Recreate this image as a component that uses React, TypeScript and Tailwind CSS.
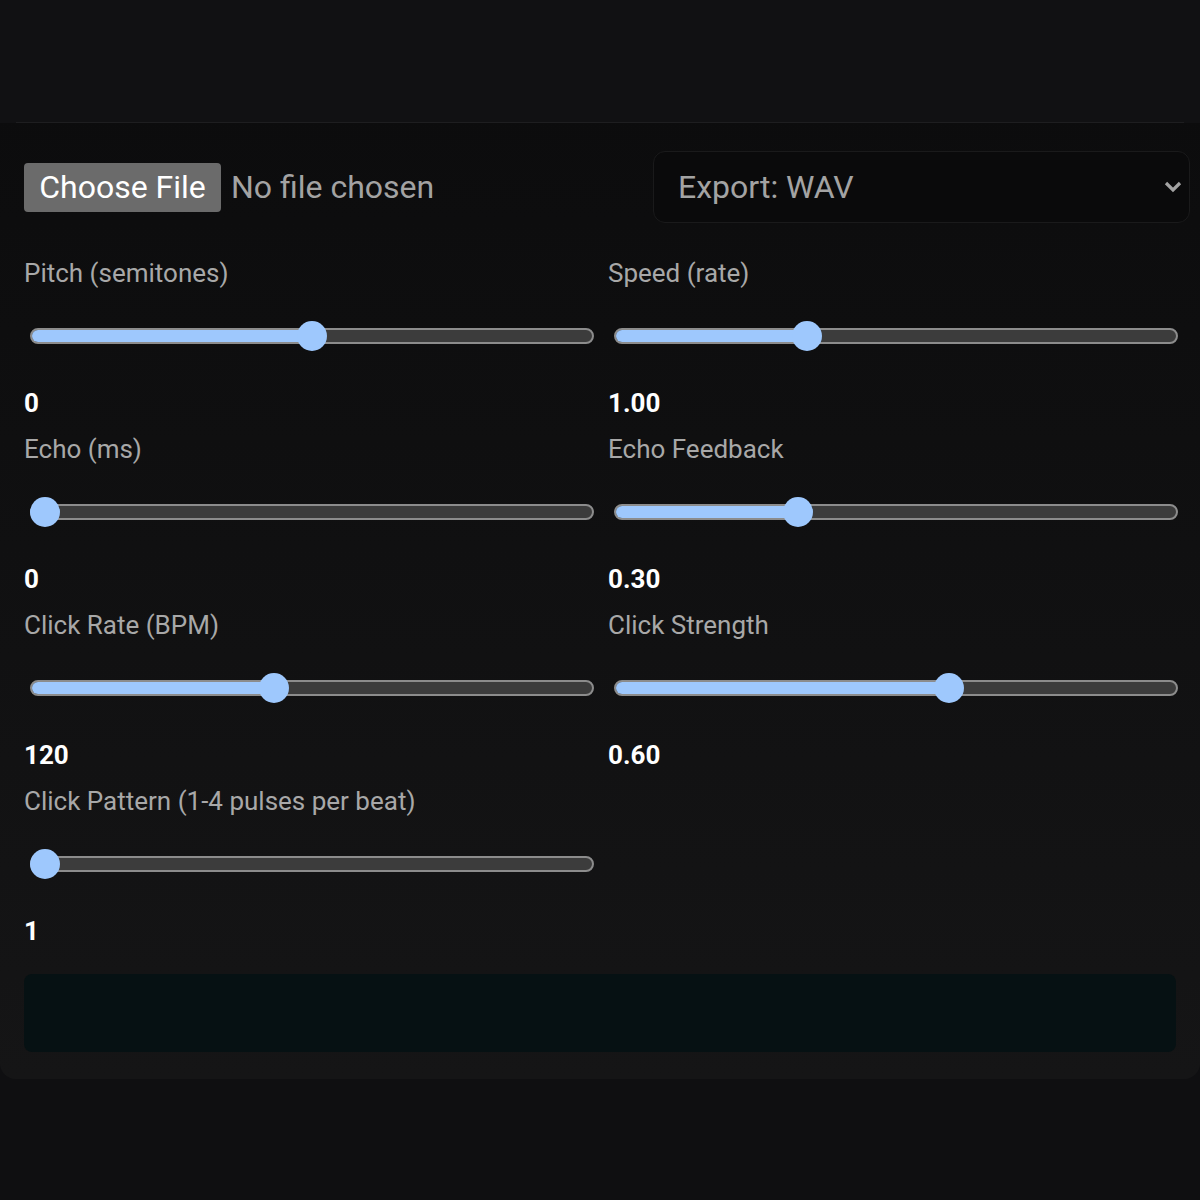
import React from "react";

type Control = {
  label: string;
  value: string;
  frac: number;
};

const controls: Control[] = [
  { label: "Pitch (semitones)", value: "0", frac: 0.5 },
  { label: "Speed (rate)", value: "1.00", frac: 1 / 3 },
  { label: "Echo (ms)", value: "0", frac: 0 },
  { label: "Echo Feedback", value: "0.30", frac: 0.316 },
  { label: "Click Rate (BPM)", value: "120", frac: 90 / 210 },
  { label: "Click Strength", value: "0.60", frac: 0.6 },
  { label: "Click Pattern (1-4 pulses per beat)", value: "1", frac: 0 },
];

// range track drawn by hand so the fill and thumb sit where the value says
function Slider({ frac }: { frac: number }) {
  const thumb = 15;
  const left = `calc(${thumb}px + ${frac} * (100% - ${thumb * 2}px))`;
  return (
    <div className="relative h-9 mx-[6px] flex items-center">
      <div className="relative w-full h-[16px] rounded-full border-2 border-[#8c8c8c] bg-[#3c3c3c] overflow-hidden">
        <div className="absolute inset-y-0 left-0 bg-[#9ec8fd]" style={{ width: left }} />
      </div>
      <div
        className="absolute top-1/2 w-[30px] h-[30px] -mt-[15px] -ml-[15px] rounded-full bg-[#9ec8fd]"
        style={{ left }}
      />
    </div>
  );
}

export default function App() {
  return (
    <div
      className="min-h-[1200px] bg-[#0f0f11] text-white"
      style={{ fontFamily: "Roboto, 'Liberation Sans', sans-serif" }}
    >
      <div className="rounded-b-2xl overflow-hidden bg-gradient-to-b from-[#0b0b0c] to-[#151516]">
        {/* header strip */}
        <div className="h-[123px] bg-[#111113] px-4">
          <div className="h-full border-b border-[#1e1e20]" />
        </div>

        <div className="pl-6 pr-6 pt-[28px] pb-[27px]">
          <div className="flex items-center justify-between">
            <div className="flex items-center gap-[10px]">
              <button className="h-[49px] w-[197px] rounded bg-[#6b6b6b] text-[32px] leading-none text-white">
                Choose File
              </button>
              <span className="text-[32px] leading-none text-[#a3a3a3]">No file chosen</span>
            </div>
            <div className="w-[537px] h-[72px] -mr-[14px] rounded-xl border border-[#1a1a1b] bg-[#0a0a0b] flex items-center justify-between pl-6 pr-[6px]">
              <span className="text-[32px] leading-none text-[#a3a3a3]">Export: WAV</span>
              <svg width="20" height="14" viewBox="0 0 20 14" className="text-[#a3a3a3]">
                <path d="M3 3l7 7 7-7" fill="none" stroke="currentColor" strokeWidth="3.2" />
              </svg>
            </div>
          </div>

          <div className="mt-[32px] -mr-2 grid grid-cols-2 gap-x-2 gap-y-[10px]">
            {controls.map((c) => (
              <div key={c.label}>
                <div className="h-9 flex items-center text-[26px] text-[#a8a8a8]">{c.label}</div>
                <div className="mt-[27px]">
                  <Slider frac={c.frac} />
                </div>
                <div className="mt-[31px] h-9 flex items-center text-[26px] font-bold text-white">
                  {c.value}
                </div>
              </div>
            ))}
          </div>

          <div className="mt-[25px] h-[78px] rounded-lg bg-[#061113]" />
        </div>
      </div>
    </div>
  );
}
